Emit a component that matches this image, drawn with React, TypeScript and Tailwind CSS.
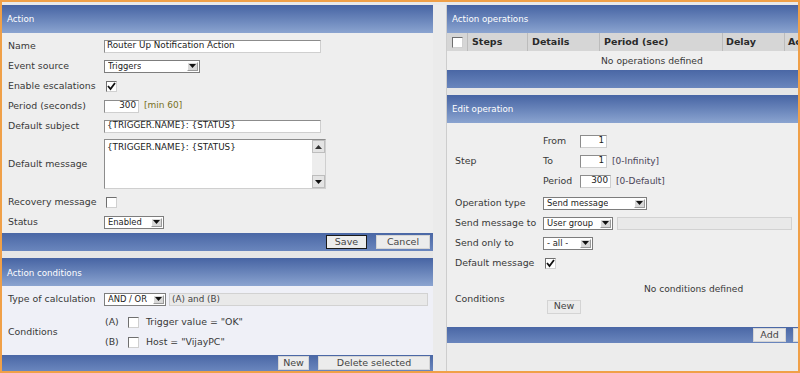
import React from "react";

function Header({ title }: { title: string }) {
  return (
    <div className="h-[28px] shrink-0 bg-linear-to-b from-[#4764a3] to-[#8ba4d0] text-white text-[8.7px] flex items-center pl-[5px] pt-[2px]">
      {title}
    </div>
  );
}

function Footer({ h, children }: { h: string; children?: React.ReactNode }) {
  return (
    <div className={`${h} shrink-0 bg-linear-to-b from-[#4a67a5] to-[#6a86bd] flex items-center justify-end gap-[9px] pr-[3px]`}>
      {children}
    </div>
  );
}

function Btn({ w, label, focus }: { w: string; label: string; focus?: boolean }) {
  return (
    <div
      className={`${w} h-[14px] shrink-0 flex items-center justify-center text-[9.5px] text-[#444] bg-[#ececec] border ${
        focus ? "border-[#1a1a1a]" : "border-[#d4d4d4]"
      }`}
    >
      {label}
    </div>
  );
}

function Input({ w, value, right }: { w: string; value: string; right?: boolean }) {
  return (
    <div
      className={`${w} h-[13px] bg-white border border-[#8c8c8c] border-r-[#cfcfcf] border-b-[#cfcfcf] text-[8.8px] text-[#222] flex items-center px-[2px] overflow-hidden whitespace-nowrap ${
        right ? "justify-end" : ""
      }`}
    >
      {value}
    </div>
  );
}

function Arrow({ up }: { up?: boolean }) {
  return (
    <svg width="7" height="4" viewBox="0 0 7 4">
      {up ? <path d="M0 4 L3.5 0 L7 4 Z" fill="#333" /> : <path d="M0 0 L7 0 L3.5 4 Z" fill="#111" />}
    </svg>
  );
}

function Select({ w, value }: { w: string; value: string }) {
  return (
    <div className={`${w} h-[13px] bg-white border border-[#7d7d7d] flex items-center justify-between pl-[3px] pr-[1px] text-[8.4px] text-[#222] whitespace-nowrap overflow-hidden`}>
      <span className="overflow-hidden">{value}</span>
      <div className="w-[11px] h-[9px] bg-[#d8d8d8] border border-[#9a9a9a] border-t-white border-l-white flex items-center justify-center shrink-0">
        <Arrow />
      </div>
    </div>
  );
}

function Check({ on }: { on?: boolean }) {
  return (
    <div className="w-[11px] h-[11px] bg-white border border-[#6f6f6f] border-r-[#d0d0d0] border-b-[#d0d0d0] flex items-center justify-center">
      {on && (
        <svg width="9" height="9" viewBox="0 0 9 9">
          <path d="M1 4 L3.5 7 L8 1" stroke="#111" strokeWidth="1.8" fill="none" />
        </svg>
      )}
    </div>
  );
}

function Row({ label, h = "h-[20px]", children }: { label: string; h?: string; children?: React.ReactNode }) {
  return (
    <div className={`${h} flex items-center`}>
      <div className="w-[96px] shrink-0">{label}</div>
      <div className="flex items-center gap-[5px]">{children}</div>
    </div>
  );
}

function Hint({ children, olive }: { children: React.ReactNode; olive?: boolean }) {
  return <span className={`text-[9px] ${olive ? "text-[#77701e]" : "text-[#4a4458]"}`}>{children}</span>;
}

export default function App() {
  return (
    <div className="w-[800px] h-[373px] overflow-hidden border-2 border-[#f0a048] bg-[#e9e9e9] font-['DejaVu_Sans',sans-serif] text-[9.4px] text-[#383838]">
      <div className="flex h-full pt-[3px]">
        {/* left column */}
        <div className="w-[431px] shrink-0 flex flex-col">
          <Header title="Action" />
          <div className="h-[201px] bg-[#eeeeee] pl-[6px] pt-[3px]">
            <Row label="Name">
              <Input w="w-[217px]" value="Router Up Notification Action" />
            </Row>
            <Row label="Event source">
              <Select w="w-[96px]" value="Triggers" />
            </Row>
            <Row label="Enable escalations">
              <div className="pl-[2px]">
                <Check on />
              </div>
            </Row>
            <Row label="Period (seconds)">
              <Input w="w-[35px]" value="300" right />
              <Hint olive>[min 60]</Hint>
            </Row>
            <Row label="Default subject">
              <Input w="w-[217px]" value="{TRIGGER.NAME}: {STATUS}" />
            </Row>
            <Row label="Default message" h="h-[56px]">
              <div className="w-[222px] h-[50px] bg-white border border-[#8c8c8c] border-r-[#cfcfcf] border-b-[#cfcfcf] flex">
                <div className="flex-1 text-[8.8px] text-[#222] px-[2px] pt-[1px]">{"{TRIGGER.NAME}: {STATUS}"}</div>
                <div className="w-[13px] bg-[#ededed] flex flex-col justify-between">
                  <div className="h-[13px] bg-[#e4e4e4] border border-[#bdbdbd] flex items-center justify-center">
                    <Arrow up />
                  </div>
                  <div className="h-[13px] bg-[#e4e4e4] border border-[#bdbdbd] flex items-center justify-center">
                    <Arrow />
                  </div>
                </div>
              </div>
            </Row>
            <Row label="Recovery message">
              <div className="pl-[2px]">
                <Check />
              </div>
            </Row>
            <Row label="Status">
              <Select w="w-[60px]" value="Enabled" />
            </Row>
          </div>
          <Footer h="h-[18px]">
            <Btn w="w-[41px]" label="Save" focus />
            <Btn w="w-[54px]" label="Cancel" />
          </Footer>
          <div className="h-[7px] bg-[#e6e6e6]" />
          <Header title="Action conditions" />
          <div className="h-[69px] bg-[#eff0f7] pl-[6px] pt-[3px]">
            <Row label="Type of calculation">
              <Select w="w-[62px]" value="AND / OR" />
              <div className="w-[259px] h-[13px] -ml-[2px] bg-[#e9e9e9] border border-[#d2d2d2] text-[8.8px] text-[#444] flex items-center px-[2px]">
                (A) and (B)
              </div>
            </Row>
            <div className="flex items-center mt-[3px]">
              <div className="w-[96px] shrink-0">Conditions</div>
              <div className="flex flex-col">
                <div className="h-[20px] flex items-center gap-[6px] pl-[1px]">
                  <span className="w-[17px]">(A)</span>
                  <Check />
                  <span className="pl-[1px]">Trigger value = "OK"</span>
                </div>
                <div className="h-[20px] flex items-center gap-[6px] pl-[1px]">
                  <span className="w-[17px]">(B)</span>
                  <Check />
                  <span className="pl-[1px]">Host = "VijayPC"</span>
                </div>
              </div>
            </div>
          </div>
          <Footer h="h-[16px]">
            <Btn w="w-[31px]" label="New" />
            <Btn w="w-[112px]" label="Delete selected" />
          </Footer>
        </div>

        {/* gap */}
        <div className="w-[13px] shrink-0 bg-[#ebebeb]" />

        {/* right column */}
        <div className="flex-1 flex flex-col border-l border-[#cdcdcd] bg-[#ececec] overflow-hidden">
          <Header title="Action operations" />
          <div className="h-[18px] shrink-0 flex bg-[#d6d6d6] font-bold text-[9.5px] text-[#2a2a2a] whitespace-nowrap">
            <div className="w-[21px] shrink-0 flex items-center justify-center border-r border-[#bcbcbc]">
              <Check />
            </div>
            <div className="w-[60px] shrink-0 flex items-center pl-[4px] border-r border-[#bcbcbc]">Steps</div>
            <div className="w-[72px] shrink-0 flex items-center pl-[4px] border-r border-[#bcbcbc]">Details</div>
            <div className="w-[123px] shrink-0 flex items-center pl-[4px] border-r border-[#bcbcbc]">Period (sec)</div>
            <div className="w-[62px] shrink-0 flex items-center pl-[3px] border-r border-[#bcbcbc]">Delay</div>
            <div className="flex items-center pl-[3px]">Ac</div>
          </div>
          <div className="h-[19px] shrink-0 bg-[#efefef] flex items-center pl-[154px] text-[9.2px]">No operations defined</div>
          <Footer h="h-[18px]" />
          <div className="h-[7px] shrink-0 bg-[#e6e6e6]" />
          <Header title="Edit operation" />
          <div className="h-[204px] shrink-0 bg-[#efefef] pl-[8px] pt-[8px]">
            <div className="flex items-center">
              <div className="w-[88px] shrink-0">Step</div>
              <div className="flex flex-col">
                <div className="h-[20px] flex items-center">
                  <span className="w-[37px]">From</span>
                  <Input w="w-[27px]" value="1" right />
                </div>
                <div className="h-[20px] flex items-center">
                  <span className="w-[37px]">To</span>
                  <Input w="w-[27px]" value="1" right />
                  <span className="pl-[5px]">
                    <Hint>[0-Infinity]</Hint>
                  </span>
                </div>
                <div className="h-[20px] flex items-center">
                  <span className="w-[37px]">Period</span>
                  <Input w="w-[31px]" value="300" right />
                  <span className="pl-[5px]">
                    <Hint>[0-Default]</Hint>
                  </span>
                </div>
              </div>
            </div>
            <div className="h-[2px]" />
            <div className="h-[20px] flex items-center">
              <div className="w-[88px] shrink-0">Operation type</div>
              <Select w="w-[104px]" value="Send message" />
            </div>
            <div className="h-[20px] flex items-center">
              <div className="w-[88px] shrink-0">Send message to</div>
              <Select w="w-[70px]" value="User group" />
              <div className="ml-[4px] w-[175px] h-[13px] bg-[#e9e9e9] border border-[#d2d2d2]" />
            </div>
            <div className="h-[20px] flex items-center">
              <div className="w-[88px] shrink-0">Send only to</div>
              <Select w="w-[50px]" value="- all -" />
            </div>
            <div className="h-[20px] flex items-center">
              <div className="w-[88px] shrink-0">Default message</div>
              <div className="pl-[2px]">
                <Check on />
              </div>
            </div>
            <div className="flex items-center h-[50px]">
              <div className="w-[88px] shrink-0 pt-[2px]">Conditions</div>
              <div className="flex flex-col">
                <div className="pl-[101px] text-[9.1px] h-[14px] flex items-center whitespace-nowrap">No conditions defined</div>
                <div className="pl-[4px] mt-[3px]">
                  <Btn w="w-[34px]" label="New" />
                </div>
              </div>
            </div>
          </div>
          <div className="h-[16px] shrink-0 bg-linear-to-b from-[#4a67a5] to-[#6a86bd] flex items-center pl-[306px] gap-[7px]">
            <Btn w="w-[33px]" label="Add" />
            <Btn w="w-[40px]" label="" />
          </div>
        </div>
      </div>
    </div>
  );
}
